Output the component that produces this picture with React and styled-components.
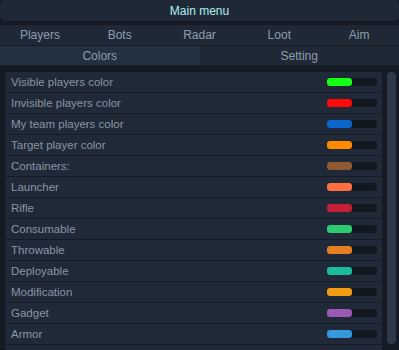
import styled, { createGlobalStyle } from "styled-components";

const GlobalStyle = createGlobalStyle`
  html, body {
    margin: 0;
    padding: 0;
    background: #141b24;
  }
  body {
    font-family: "Liberation Sans", Arial, sans-serif;
  }
`;

const Menu = styled.div`
  width: 399px;
  height: 350px;
  background: #141b24;
  display: flex;
  flex-direction: column;
  overflow: hidden;
`;

const Header = styled.div`
  height: 21px;
  flex-shrink: 0;
  background: #1f2936;
  border-radius: 5px;
  color: #b0eef2;
  font-size: 12px;
  display: flex;
  align-items: center;
  justify-content: center;
  margin-bottom: 4px;
`;

const TabRow = styled.div`
  display: grid;
  flex-shrink: 0;
  grid-template-columns: repeat(${(p) => p.cols}, 1fr);
  height: ${(p) => p.h}px;
  border-bottom: 1px solid #151c25;
`;

const Tab = styled.div`
  display: flex;
  align-items: center;
  justify-content: center;
  font-size: 12px;
  color: #8e9db0;
  background: ${(p) => (p.active ? "#223040" : "#1f2936")};
`;

const Body = styled.div`
  flex: 1;
  display: flex;
  padding: 6px 0 0 5px;
  gap: 5px;
`;

const List = styled.div`
  width: 377px;
  display: flex;
  flex-direction: column;
`;

const Row = styled.div`
  height: 20px;
  flex-shrink: 0;
  border-bottom: 1px solid #141b24;
  background: #1f2937;
  display: flex;
  align-items: center;
  justify-content: space-between;
  padding: 0 5px 0 6px;
  font-size: 11.5px;
  color: #8a96a5;
`;

const Swatch = styled.div`
  width: 50px;
  height: 8px;
  border-radius: 3px;
  background: #111820;
  display: flex;
`;

const Fill = styled.div`
  width: 25px;
  border-radius: 3px;
  background: ${(p) => p.color};
`;

const Track = styled.div`
  width: 9px;
  height: 272px;
  border-radius: 4px;
  background: #2e3947;
`;

const tabs = ["Players", "Bots", "Radar", "Loot", "Aim"];

const items = [
  ["Visible players color", "#16ff16"],
  ["Invisible players color", "#ff0a0a"],
  ["My team players color", "#0a66cc"],
  ["Target player color", "#ff8a00"],
  ["Containers:", "#8e5a30"],
  ["Launcher", "#ff6f40"],
  ["Rifle", "#c62038"],
  ["Consumable", "#2ecc71"],
  ["Throwable", "#e67e22"],
  ["Deployable", "#1abc9c"],
  ["Modification", "#f39c12"],
  ["Gadget", "#9b59b6"],
  ["Armor", "#3498db"],
  ["", null],
];

export default function App() {
  return (
    <Menu>
      <GlobalStyle />
      <Header>Main menu</Header>
      <TabRow cols={5} h={20}>
        {tabs.map((t) => (
          <Tab key={t}>{t}</Tab>
        ))}
      </TabRow>
      <TabRow cols={2} h={19}>
        <Tab active>Colors</Tab>
        <Tab>Setting</Tab>
      </TabRow>
      <Body>
        <List>
          {items.map(([name, color], i) => (
            <Row key={i}>
              <span>{name}</span>
              {color && (
                <Swatch>
                  <Fill color={color} />
                </Swatch>
              )}
            </Row>
          ))}
        </List>
        <Track />
      </Body>
    </Menu>
  );
}
